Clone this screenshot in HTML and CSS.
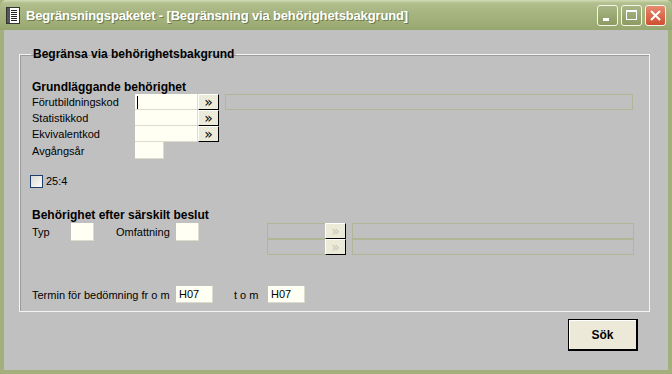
FILE: index.html
```html
<!DOCTYPE html>
<html>

<head>
    <meta charset="UTF-8">
    <title>Begränsningspaketet</title>
    <link rel="stylesheet" href="styles.css">
</head>

<body>
    <div class="window">
        <div class="titlebar">
            <svg class="appicon" width="14" height="17" viewBox="0 0 14 17">
                <rect x="0.5" y="0.5" width="13" height="16" fill="#fff" stroke="#333"/>
                <rect x="1" y="1" width="3" height="15" fill="#555"/>
                <path d="M5 3.5h6M5 5.5h6M5 7.5h6M5 9.5h6M5 11.5h6M5 13.5h6" stroke="#222" stroke-width="1"/>
            </svg>
            <span class="title">Begränsningspaketet - [Begränsning via behörighetsbakgrund]</span>
            <div class="controls">
                <div class="ctl"><span class="min"></span></div>
                <div class="ctl"><span class="max"></span></div>
                <div class="ctl close">
                    <svg width="13" height="13" viewBox="0 0 13 13"><path d="M2 2L11 11M11 2L2 11" stroke="#fff" stroke-width="2"/></svg>
                </div>
            </div>
        </div>

        <div class="content">
            <fieldset class="group">
                <legend>Begränsa via behörighetsbakgrund</legend>

                <div class="heading first">Grundläggande behörighet</div>
                <div class="row">
                    <label class="lbl">Förutbildningskod</label>
                    <div class="field wide caret"></div>
                    <button class="pick">&raquo;</button>
                    <div class="disabled long"></div>
                </div>
                <div class="row">
                    <label class="lbl">Statistikkod</label>
                    <div class="field wide"></div>
                    <button class="pick">&raquo;</button>
                </div>
                <div class="row">
                    <label class="lbl">Ekvivalentkod</label>
                    <div class="field wide"></div>
                    <button class="pick">&raquo;</button>
                </div>
                <div class="row tall">
                    <label class="lbl">Avgångsår</label>
                    <div class="field year"></div>
                </div>

                <div class="check">
                    <span class="box"></span>
                    <span>25:4</span>
                </div>

                <div class="heading">Behörighet efter särskilt beslut</div>
                <div class="special">
                    <div class="row tall">
                        <label class="lbl short">Typ</label>
                        <div class="field tiny"></div>
                        <label class="lbl mid">Omfattning</label>
                        <div class="field tiny"></div>
                    </div>
                    <div class="lookup">
                        <div class="row">
                            <div class="disabled code"></div>
                            <button class="pick faded">&raquo;</button>
                            <div class="disabled rest"></div>
                        </div>
                        <div class="row">
                            <div class="disabled code"></div>
                            <button class="pick faded">&raquo;</button>
                            <div class="disabled rest"></div>
                        </div>
                    </div>
                </div>

                <div class="row term">
                    <label class="lbl termlbl">Termin för bedömning fr o m</label>
                    <div class="field sem">H07</div>
                    <label class="lbl tom">t o m</label>
                    <div class="field sem">H07</div>
                </div>
            </fieldset>

            <div class="footer">
                <button class="search">Sök</button>
            </div>
        </div>
    </div>
</body>

</html>
```

FILE: styles.css
```css
body {
    margin: 0;
    font-family: "Liberation Sans", Arial, sans-serif;
    font-size: 11px;
    color: #000;
}

.window {
    width: 672px;
    height: 374px;
    box-sizing: border-box;
    background-color: #c0c0c0;
    border: 4px solid #a3b07c;
    border-top: none;
    display: flex;
    flex-direction: column;
}

/* Title bar */
.titlebar {
    height: 30px;
    margin: 0 -4px;
    padding: 0 6px;
    display: flex;
    align-items: center;
    background: linear-gradient(#d2dbb6 0, #b2bf8e 3px, #a7b581 12px, #a0ae78 22px, #97a56e 30px);
    border-radius: 6px 6px 0 0;
}

.appicon {
    margin-top: 1px;
}

.title {
    margin-left: 6px;
    color: #fff;
    font-weight: bold;
    font-size: 13px;
    letter-spacing: -0.15px;
    text-shadow: 1px 1px 0 #6f7b4c;
}

.controls {
    margin-left: auto;
    display: flex;
    gap: 3px;
    margin-right: 0;
}

.ctl {
    width: 19px;
    height: 19px;
    border: 1px solid #f3f5e8;
    border-radius: 3px;
    background: linear-gradient(#a9b585, #8d9a62);
    position: relative;
    display: flex;
    align-items: center;
    justify-content: center;
}

.min {
    position: absolute;
    left: 5px;
    bottom: 4px;
    width: 6px;
    height: 3px;
    background: #fff;
}

.max {
    width: 9px;
    height: 7px;
    border: 1px solid #fff;
    border-top-width: 2px;
}

.ctl.close {
    background: linear-gradient(#e48a6e, #cf4f32);
}

/* Content */
.content {
    flex: 1;
    display: flex;
    flex-direction: column;
}

.group {
    margin: 17px 19px 0 15px;
    padding: 0 15px 7px 12px;
    border: 1px solid #f4f4f4;
    box-shadow: inset 1px 1px 0 #9c9c9c;
    height: 265px;
    box-sizing: border-box;
}

.group legend {
    padding: 0 2px;
    margin-left: -1px;
    font-weight: bold;
    font-size: 12px;
    height: 14px;
    line-height: 14px;
}

.heading {
    font-weight: bold;
    font-size: 12px;
    line-height: 13px;
    margin-top: 21px;
}

.heading.first {
    margin-top: 20px;
}

.row {
    display: flex;
    align-items: center;
    height: 16px;
}

.row.tall {
    height: 17px;
}

.lbl {
    width: 103px;
    flex: none;
}

.field {
    box-sizing: border-box;
    height: 16px;
    background-color: #fffff4;
    border-bottom: 1px solid #dcdccc;
    border-right: 1px solid #dcdccc;
    flex: none;
    padding-left: 3px;
    line-height: 16px;
}

.wide {
    width: 63px;
}

.caret {
    position: relative;
}

.caret::before {
    content: "";
    position: absolute;
    left: 2px;
    top: 2px;
    width: 1px;
    height: 13px;
    background: #000;
}

.year {
    width: 29px;
    height: 17px;
}

.pick {
    box-sizing: border-box;
    width: 21px;
    height: 16px;
    padding: 0;
    margin: 0;
    font: 14px "DejaVu Sans", sans-serif;
    line-height: 12px;
    background-color: #ecead8;
    border: 1px solid #fff;
    border-right: 1px solid #000;
    border-bottom: 1px solid #000;
    flex: none;
}

.pick.faded {
    color: #c8c6b4;
}

.disabled {
    box-sizing: border-box;
    height: 16px;
    border: 1px solid #b0b696;
    flex: none;
}

.long {
    width: 408px;
    margin-left: 6px;
}

.check {
    margin: 15px 0 0 -2px;
    display: flex;
    align-items: center;
    gap: 3px;
    height: 14px;
}

.box {
    width: 11px;
    height: 11px;
    border: 1px solid #1c3e6b;
    background: linear-gradient(135deg, #dcdcd6, #fbfbf8);
}

.special {
    display: flex;
    align-items: flex-start;
    margin-top: 1px;
}

.lbl.short {
    width: 39px;
}

.tiny {
    width: 23px;
    height: 18px;
}

.row.tall:has(.tiny) {
    height: 18px;
}

.lbl.mid {
    margin-left: 22px;
    width: 60px;
}

.lookup {
    margin-left: 68px;
}

.code {
    width: 58px;
    border-right: none;
}

.rest {
    width: 282px;
    margin-left: 6px;
}

.term {
    margin-top: 31px;
    height: 17px;
}

.termlbl {
    width: 144px;
}

.sem {
    width: 37px;
    height: 17px;
    font-size: 11px;
}

.lbl.tom {
    width: 34px;
    margin-left: 21px;
}

.footer {
    display: flex;
    justify-content: flex-end;
    padding: 7px 30px 0 0;
}

.search {
    box-sizing: border-box;
    width: 70px;
    height: 32px;
    background-color: #ece9d8;
    border: 1px solid #000;
    border-right-width: 2px;
    border-bottom-width: 2px;
    box-shadow: inset 1px 1px 0 #fff;
    font: bold 12px "Liberation Sans", Arial, sans-serif;
}
```
